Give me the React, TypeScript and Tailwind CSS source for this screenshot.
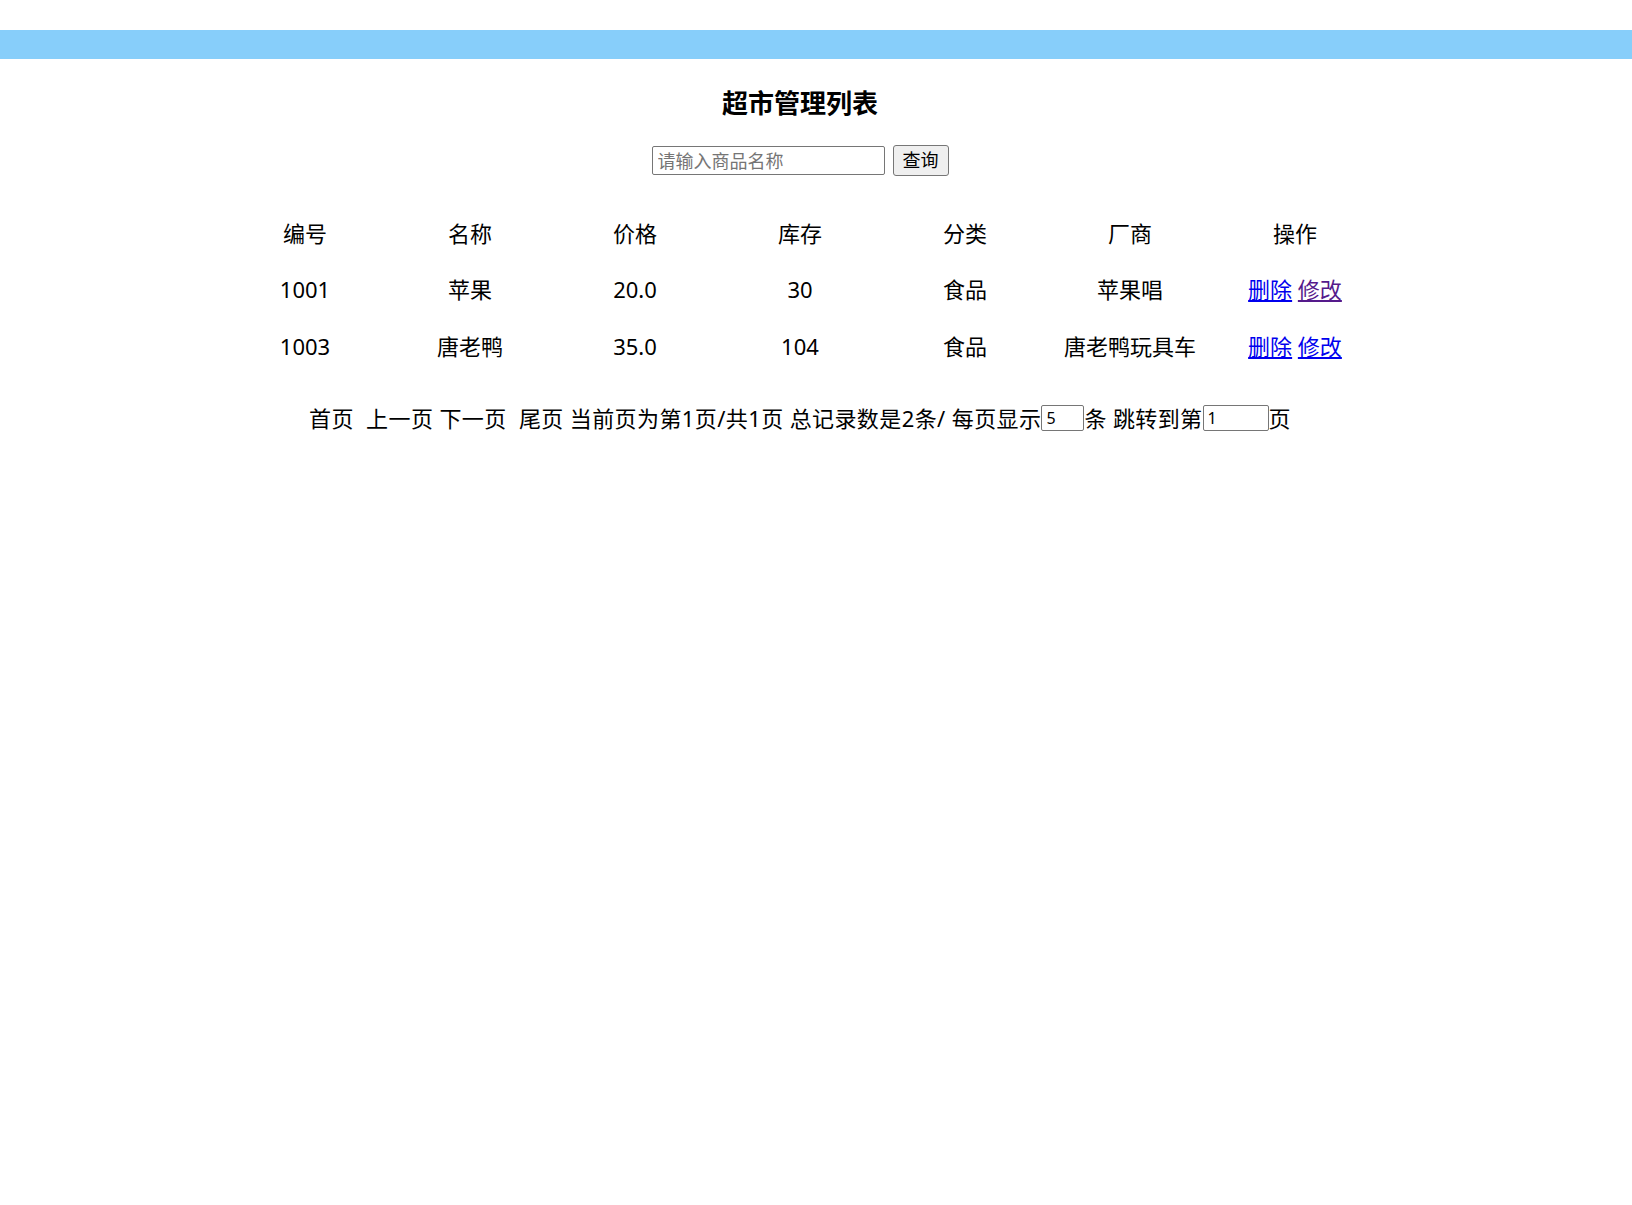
import { useState } from "react";

interface Goods {
  id: string;
  name: string;
  price: string;
  stock: string;
  category: string;
  maker: string;
  visited: boolean;
}

const goodsList: Goods[] = [
  { id: "1001", name: "苹果", price: "20.0", stock: "30", category: "食品", maker: "苹果唱", visited: true },
  { id: "1003", name: "唐老鸭", price: "35.0", stock: "104", category: "食品", maker: "唐老鸭玩具车", visited: false },
];

const headers = ["编号", "名称", "价格", "库存", "分类", "厂商", "操作"];

export default function App() {
  const [keyword, setKeyword] = useState("");
  const [pageSize, setPageSize] = useState("5");
  const [jumpPage, setJumpPage] = useState("1");

  return (
    <div className="min-h-screen bg-white text-black font-['Noto_Sans','Noto_Sans_CJK_SC',sans-serif]">
      <div className="h-[30px]" />
      <div className="h-[29px] bg-[#87cefa]" />
      <div className="w-[1600px] flex flex-col items-center">
        <h1 className="mt-[25px] text-[26px] leading-[39px] font-bold">超市管理列表</h1>
        <form
          className="mt-[22px] flex items-center gap-2"
          onSubmit={(e) => e.preventDefault()}
        >
          <input
            value={keyword}
            onChange={(e) => setKeyword(e.target.value)}
            placeholder="请输入商品名称"
            className="w-[233px] h-[29px] px-[5px] text-[18px] border border-[#767676] rounded-[2px] placeholder:text-[#757575] outline-none"
          />
          <button
            type="submit"
            className="w-[56px] h-[31px] text-[18px] bg-[#efefef] border border-[#767676] rounded-[3px]"
          >
            查询
          </button>
        </form>
        <table className="mt-[29px] w-[1155px] table-fixed text-[22px]">
          <thead>
            <tr className="h-[56px]">
              {headers.map((h) => (
                <th key={h} className="font-normal text-center">
                  {h}
                </th>
              ))}
            </tr>
          </thead>
          <tbody>
            {goodsList.map((g) => (
              <tr key={g.id} className="h-[57px]">
                <td className="text-center">{g.id}</td>
                <td className="text-center">{g.name}</td>
                <td className="text-center">{g.price}</td>
                <td className="text-center">{g.stock}</td>
                <td className="text-center">{g.category}</td>
                <td className="text-center">{g.maker}</td>
                <td className="text-center">
                  <a href="#" className="underline text-[#0000ee]">删除</a>{" "}
                  <a
                    href="#"
                    className={`underline ${g.visited ? "text-[#551a8b]" : "text-[#0000ee]"}`}
                  >
                    修改
                  </a>
                </td>
              </tr>
            ))}
          </tbody>
        </table>
        <div className="mt-[28px] flex items-center text-[22px] leading-[30px] tracking-[0.4px] whitespace-pre">
          <span>首页  上一页 下一页  尾页 当前页为第1页/共1页 总记录数是2条/ 每页显示</span>
          <input
            value={pageSize}
            onChange={(e) => setPageSize(e.target.value)}
            className="w-[43px] h-[26px] px-[4px] text-[16px] border border-[#767676] rounded-[2px] outline-none"
          />
          <span>条 跳转到第</span>
          <input
            value={jumpPage}
            onChange={(e) => setJumpPage(e.target.value)}
            className="w-[66px] h-[26px] px-[4px] text-[16px] border border-[#767676] rounded-[2px] outline-none"
          />
          <span>页</span>
        </div>
      </div>
    </div>
  );
}
